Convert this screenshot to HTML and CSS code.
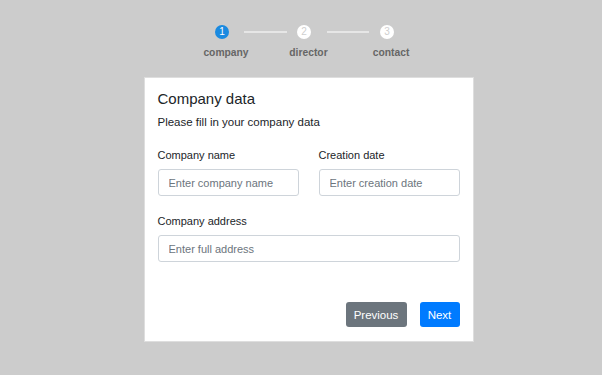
FILE: index.html
```html
<!DOCTYPE html>
<html>
<head>
<meta charset="utf-8">
<link rel="stylesheet" href="styles.css">
</head>
<body>
<div class="page">
  <div class="steps">
    <span class="dot active">1</span>
    <span class="line line-a"></span>
    <span class="dot">2</span>
    <span class="line line-b"></span>
    <span class="dot">3</span>
  </div>
  <div class="step-labels">
    <span>company</span>
    <span>director</span>
    <span>contact</span>
  </div>
  <div class="card">
    <h1 class="title">Company data</h1>
    <p class="subtitle">Please fill in your company data</p>
    <div class="row">
      <div class="field">
        <label class="label">Company name</label>
        <input class="input" placeholder="Enter company name">
      </div>
      <div class="field">
        <label class="label">Creation date</label>
        <input class="input" placeholder="Enter creation date">
      </div>
    </div>
    <div class="field field-full">
      <label class="label">Company address</label>
      <input class="input" placeholder="Enter full address">
    </div>
    <div class="actions">
      <button class="btn btn-secondary">Previous</button>
      <button class="btn btn-primary">Next</button>
    </div>
  </div>
</div>
</body>
</html>
```
FILE: styles.css
```css
* { box-sizing: border-box; }
html, body { margin: 0; padding: 0; }
body {
  background: #cccccc;
  font-family: "Liberation Sans", Arial, sans-serif;
  color: #212529;
  width: 602px;
  height: 375px;
  overflow: hidden;
}
.page {
  padding-left: 15px;
  padding-top: 25px;
  display: flex;
  flex-direction: column;
  align-items: center;
}
.steps {
  display: flex;
  align-items: center;
  height: 14px;
  margin-right: 8px;
}
.dot {
  width: 14px;
  height: 14px;
  border-radius: 50%;
  background: #ffffff;
  color: #cfcfcf;
  font-size: 10px;
  line-height: 14px;
  text-align: center;
}
.dot.active {
  background: #1a8ae0;
  color: #ffffff;
}
.line {
  height: 2px;
  background: #e6e6e6;
}
.line-a { width: 43px; margin: 0 10px 0 15px; }
.line-b { width: 42px; margin: 0 11px 0 16px; }
.step-labels {
  display: grid;
  grid-template-columns: 82.5px 82.5px 82.5px;
  margin-top: 7px;
  height: 13px;
  font-size: 10.3px;
  line-height: 13px;
  font-weight: bold;
  color: #666666;
  text-align: center;
}
.card {
  margin-top: 18px;
  width: 330px;
  height: 265px;
  background: #ffffff;
  border: 1px solid #dedede;
  padding: 12px 13px 13px 13px;
}
.title {
  margin: 0;
  font-size: 15px;
  font-weight: normal;
  line-height: 18px;
}
.subtitle {
  margin: 6px 0 0 0;
  font-size: 11.5px;
  line-height: 16px;
}
.row {
  display: grid;
  grid-template-columns: 141px 141px;
  column-gap: 20px;
  margin-top: 18px;
}
.field {
  display: flex;
  flex-direction: column;
}
.field-full { margin-top: 18px; }
.label {
  font-size: 11px;
  line-height: 14px;
  margin-bottom: 7px;
}
.input {
  height: 27px;
  border: 1px solid #ced4da;
  border-radius: 3px;
  padding: 0 10px;
  font-family: "Liberation Sans", Arial, sans-serif;
  font-size: 11px;
  color: #495057;
  outline: none;
}
.input::placeholder { color: #6c757d; }
.actions {
  display: flex;
  justify-content: flex-end;
  gap: 13px;
  margin-top: 40px;
}
.btn {
  height: 25px;
  border: none;
  border-radius: 3px;
  font-family: "Liberation Sans", Arial, sans-serif;
  font-size: 11.5px;
  color: #ffffff;
  padding: 0 7px;
}
.btn-secondary { background: #6c757d; width: 61px; }
.btn-primary { background: #007bff; width: 40px; }
```
